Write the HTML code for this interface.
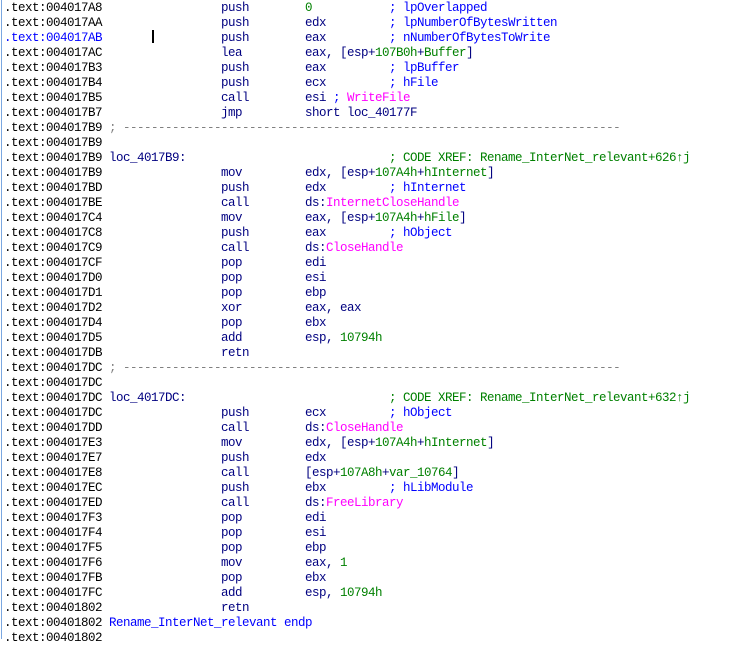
<!DOCTYPE html>
<html><head><meta charset="utf-8"><style>
html,body{margin:0;padding:0;background:#fff;width:750px;height:639px;overflow:hidden}
#v{position:absolute;left:4px;top:1px;font-family:"Liberation Mono","DejaVu Sans Mono",monospace;font-size:12.5px;letter-spacing:-0.5px;line-height:15px;color:#000}
.l{height:15px;white-space:pre}
.ad,.lb,.mn,.op{display:inline-block}
.ad{width:105px}.lb{width:112px}.mn{width:84px;color:#000080}.op{width:84px;color:#000080}
.c{color:#0000ff}.n{color:#008000}.f{color:#ff00ff}.g{color:#808080}.x{color:#008000}.lab{color:#000080}.sel{color:#0000ff}
#bar{position:absolute;left:1px;top:0;width:1px;height:639px;background:#7aa7e0}
#cur{position:absolute;left:152px;top:30px;width:2px;height:13px;background:#000}
</style></head><body>
<div id="bar"></div>
<div id="v"><div class="l"><span class="ad">.text:004017A8</span><span class="lb"></span><span class="mn">push</span><span class="op"><span class="n">0</span></span><span class="c">; lpOverlapped</span></div><div class="l"><span class="ad">.text:004017AA</span><span class="lb"></span><span class="mn">push</span><span class="op">edx</span><span class="c">; lpNumberOfBytesWritten</span></div><div class="l"><span class="ad sel">.text:004017AB</span><span class="lb"></span><span class="mn">push</span><span class="op">eax</span><span class="c">; nNumberOfBytesToWrite</span></div><div class="l"><span class="ad">.text:004017AC</span><span class="lb"></span><span class="mn">lea</span><span class="op">eax, [esp+<span class="n">107B0h</span>+<span class="n">Buffer</span>]</span></div><div class="l"><span class="ad">.text:004017B3</span><span class="lb"></span><span class="mn">push</span><span class="op">eax</span><span class="c">; lpBuffer</span></div><div class="l"><span class="ad">.text:004017B4</span><span class="lb"></span><span class="mn">push</span><span class="op">ecx</span><span class="c">; hFile</span></div><div class="l"><span class="ad">.text:004017B5</span><span class="lb"></span><span class="mn">call</span><span class="op">esi <span class="c">; </span><span class="f">WriteFile</span></span></div><div class="l"><span class="ad">.text:004017B7</span><span class="lb"></span><span class="mn">jmp</span><span class="op">short loc_40177F</span></div><div class="l"><span class="ad">.text:004017B9</span><span class="g">; -----------------------------------------------------------------------</span></div><div class="l"><span class="ad">.text:004017B9</span></div><div class="l"><span class="ad">.text:004017B9</span><span class="lab" style="display:inline-block;width:280px">loc_4017B9:</span><span class="x">; CODE XREF: Rename_InterNet_relevant+626↑j</span></div><div class="l"><span class="ad">.text:004017B9</span><span class="lb"></span><span class="mn">mov</span><span class="op">edx, [esp+<span class="n">107A4h</span>+<span class="n">hInternet</span>]</span></div><div class="l"><span class="ad">.text:004017BD</span><span class="lb"></span><span class="mn">push</span><span class="op">edx</span><span class="c">; hInternet</span></div><div class="l"><span class="ad">.text:004017BE</span><span class="lb"></span><span class="mn">call</span><span class="op">ds:<span class="f">InternetCloseHandle</span></span></div><div class="l"><span class="ad">.text:004017C4</span><span class="lb"></span><span class="mn">mov</span><span class="op">eax, [esp+<span class="n">107A4h</span>+<span class="n">hFile</span>]</span></div><div class="l"><span class="ad">.text:004017C8</span><span class="lb"></span><span class="mn">push</span><span class="op">eax</span><span class="c">; hObject</span></div><div class="l"><span class="ad">.text:004017C9</span><span class="lb"></span><span class="mn">call</span><span class="op">ds:<span class="f">CloseHandle</span></span></div><div class="l"><span class="ad">.text:004017CF</span><span class="lb"></span><span class="mn">pop</span><span class="op">edi</span></div><div class="l"><span class="ad">.text:004017D0</span><span class="lb"></span><span class="mn">pop</span><span class="op">esi</span></div><div class="l"><span class="ad">.text:004017D1</span><span class="lb"></span><span class="mn">pop</span><span class="op">ebp</span></div><div class="l"><span class="ad">.text:004017D2</span><span class="lb"></span><span class="mn">xor</span><span class="op">eax, eax</span></div><div class="l"><span class="ad">.text:004017D4</span><span class="lb"></span><span class="mn">pop</span><span class="op">ebx</span></div><div class="l"><span class="ad">.text:004017D5</span><span class="lb"></span><span class="mn">add</span><span class="op">esp, <span class="n">10794h</span></span></div><div class="l"><span class="ad">.text:004017DB</span><span class="lb"></span><span class="mn">retn</span></div><div class="l"><span class="ad">.text:004017DC</span><span class="g">; -----------------------------------------------------------------------</span></div><div class="l"><span class="ad">.text:004017DC</span></div><div class="l"><span class="ad">.text:004017DC</span><span class="lab" style="display:inline-block;width:280px">loc_4017DC:</span><span class="x">; CODE XREF: Rename_InterNet_relevant+632↑j</span></div><div class="l"><span class="ad">.text:004017DC</span><span class="lb"></span><span class="mn">push</span><span class="op">ecx</span><span class="c">; hObject</span></div><div class="l"><span class="ad">.text:004017DD</span><span class="lb"></span><span class="mn">call</span><span class="op">ds:<span class="f">CloseHandle</span></span></div><div class="l"><span class="ad">.text:004017E3</span><span class="lb"></span><span class="mn">mov</span><span class="op">edx, [esp+<span class="n">107A4h</span>+<span class="n">hInternet</span>]</span></div><div class="l"><span class="ad">.text:004017E7</span><span class="lb"></span><span class="mn">push</span><span class="op">edx</span></div><div class="l"><span class="ad">.text:004017E8</span><span class="lb"></span><span class="mn">call</span><span class="op">[esp+<span class="n">107A8h</span>+<span class="n">var_10764</span>]</span></div><div class="l"><span class="ad">.text:004017EC</span><span class="lb"></span><span class="mn">push</span><span class="op">ebx</span><span class="c">; hLibModule</span></div><div class="l"><span class="ad">.text:004017ED</span><span class="lb"></span><span class="mn">call</span><span class="op">ds:<span class="f">FreeLibrary</span></span></div><div class="l"><span class="ad">.text:004017F3</span><span class="lb"></span><span class="mn">pop</span><span class="op">edi</span></div><div class="l"><span class="ad">.text:004017F4</span><span class="lb"></span><span class="mn">pop</span><span class="op">esi</span></div><div class="l"><span class="ad">.text:004017F5</span><span class="lb"></span><span class="mn">pop</span><span class="op">ebp</span></div><div class="l"><span class="ad">.text:004017F6</span><span class="lb"></span><span class="mn">mov</span><span class="op">eax, <span class="n">1</span></span></div><div class="l"><span class="ad">.text:004017FB</span><span class="lb"></span><span class="mn">pop</span><span class="op">ebx</span></div><div class="l"><span class="ad">.text:004017FC</span><span class="lb"></span><span class="mn">add</span><span class="op">esp, <span class="n">10794h</span></span></div><div class="l"><span class="ad">.text:00401802</span><span class="lb"></span><span class="mn">retn</span></div><div class="l"><span class="ad">.text:00401802</span><span class="c">Rename_InterNet_relevant endp</span></div><div class="l"><span class="ad">.text:00401802</span></div></div>
<div id="cur"></div>
</body></html>
